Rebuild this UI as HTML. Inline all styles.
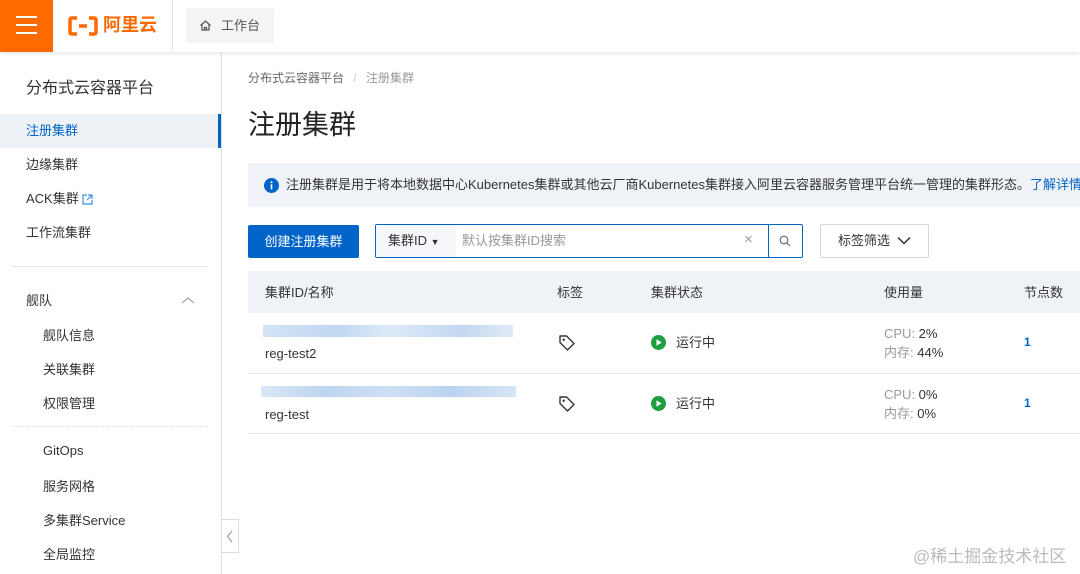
<!DOCTYPE html>
<html><head><meta charset="utf-8"><style>
*{margin:0;padding:0;box-sizing:border-box}
body{width:1080px;height:574px;overflow:hidden;background:#fff;font-family:"Liberation Sans","Noto Sans CJK SC",sans-serif;color:#333;position:relative;font-size:13px;line-height:1.25}
.abs{position:absolute;white-space:nowrap}
.hdr{position:absolute;left:0;top:0;width:1080px;height:52px;background:#fff;box-shadow:0 1px 4px rgba(0,0,0,.12);z-index:2}
.side{position:absolute;left:0;top:52px;width:222px;height:522px;border-right:1px solid #ddd;background:#fff}
.blue{color:#0064c8}
</style></head><body>
<div class="hdr">
  <div class="abs" style="left:0;top:0;width:53px;height:52px;background:#ff6a00">
    <div class="abs" style="left:16px;top:16px;width:21px;height:2px;background:#fff"></div>
    <div class="abs" style="left:16px;top:24px;width:21px;height:2px;background:#fff"></div>
    <div class="abs" style="left:16px;top:32px;width:21px;height:2px;background:#fff"></div>
  </div>
  <svg class="abs" style="left:68px;top:16px" width="30" height="20" viewBox="0 0 30 20"><path d="M9 2H4Q2 2 2 4V16Q2 18 4 18H9M21 2H26Q28 2 28 4V16Q28 18 26 18H21M11 10H19" stroke="#ff6a00" stroke-width="3.5" fill="none"/></svg>
  <div class="abs" style="left:103px;top:14px;font-size:18px;font-weight:bold;color:#ff6a00">阿里云</div>
  <div class="abs" style="left:172px;top:0;width:1px;height:52px;background:#e5e5e5"></div>
  <div class="abs" style="left:186px;top:8px;width:88px;height:35px;background:#f3f4f6;border-radius:2px"></div>
  <svg class="abs" style="left:199px;top:19px" width="13" height="13" viewBox="0 0 13 13"><path d="M1.5 6.5L6.5 2L11.5 6.5M3 5.5V11H10V5.5M5.5 11V8.5H7.5V11" stroke="#555" stroke-width="1.2" fill="none"/></svg>
  <div class="abs" style="left:221px;top:18px;font-size:13px;color:#555">工作台</div>
</div>
<div class="side">
  <div class="abs" style="left:26px;top:27px;font-size:16px;color:#333">分布式云容器平台</div>
  <div class="abs" style="left:0;top:62px;width:221px;height:34px;background:#eef2f7"></div>
  <div class="abs" style="left:218px;top:62px;width:3px;height:34px;background:#0064c8"></div>
  <div class="abs blue" style="left:26px;top:71px;font-size:13px">注册集群</div>
  <div class="abs" style="left:26px;top:105px">边缘集群</div>
  <div class="abs" style="left:26px;top:139px">ACK集群</div>
  <svg class="abs" style="left:81px;top:141px" width="13" height="13" viewBox="0 0 13 13"><path d="M6 2H2V11H11V7M7 2H11V6M11 2L6 7" stroke="#3a8ee6" stroke-width="1.2" fill="none"/></svg>
  <div class="abs" style="left:26px;top:173px">工作流集群</div>
  <div class="abs" style="left:12px;top:214px;width:196px;height:1px;background:#e5e5e5"></div>
  <div class="abs" style="left:26px;top:241px">舰队</div>
  <svg class="abs" style="left:181px;top:244px" width="14" height="9" viewBox="0 0 14 9"><path d="M1 7L7 2L13 7" stroke="#999" stroke-width="1.1" fill="none"/></svg>
  <div class="abs" style="left:43px;top:276px">舰队信息</div>
  <div class="abs" style="left:43px;top:310px">关联集群</div>
  <div class="abs" style="left:43px;top:344px">权限管理</div>
  <div class="abs" style="left:12px;top:374px;width:196px;border-top:1px dashed #e3e3e3"></div>
  <div class="abs" style="left:43px;top:391px">GitOps</div>
  <div class="abs" style="left:43px;top:427px">服务网格</div>
  <div class="abs" style="left:43px;top:461px">多集群Service</div>
  <div class="abs" style="left:43px;top:495px">全局监控</div>
</div>
<div class="abs" style="left:222px;top:519px;width:17px;height:34px;border:1px solid #ddd;border-left:none;background:#fff"></div>
<svg class="abs" style="left:226px;top:530px" width="8" height="13" viewBox="0 0 8 13"><path d="M6 1L1.5 6.5L6 12" stroke="#999" stroke-width="1.1" fill="none"/></svg>

<div class="abs" style="left:248px;top:71px;font-size:12px;color:#666">分布式云容器平台 <span style="color:#ccc;margin:0 6px">/</span> <span style="color:#999">注册集群</span></div>
<div class="abs" style="left:248px;top:109px;font-size:27px;color:#222">注册集群</div>

<div class="abs" style="left:248px;top:163px;width:840px;height:44px;background:#eff3f8"></div>
<svg class="abs" style="left:264px;top:178px" width="15" height="15" viewBox="0 0 15 15"><circle cx="7.5" cy="7.5" r="7.5" fill="#0064c8"/><rect x="6.7" y="6.3" width="1.6" height="5" fill="#fff"/><circle cx="7.5" cy="4.2" r="1" fill="#fff"/></svg>
<div class="abs" style="left:286px;top:177px;font-size:13px;color:#333">注册集群是用于将本地数据中心Kubernetes集群或其他云厂商Kubernetes集群接入阿里云容器服务管理平台统一管理的集群形态。<span class="blue">了解详情</span></div>

<div class="abs" style="left:248px;top:225px;width:111px;height:33px;background:#0064c8;border-radius:2px;color:#fff;font-size:13px;line-height:33px;text-align:center">创建注册集群</div>
<div class="abs" style="left:375px;top:224px;width:428px;height:34px;border:1px solid #0064c8;border-radius:2px;background:#fff"></div>
<div class="abs" style="left:376px;top:225px;width:80px;height:32px;background:#f5f7fa"></div>
<div class="abs" style="left:388px;top:233px;font-size:13px;color:#333">集群ID <span style="font-size:9px">▼</span></div>
<div class="abs" style="left:462px;top:233px;font-size:13px;color:#999">默认按集群ID搜索</div>
<div class="abs" style="left:744px;top:231px;font-size:15px;color:#999">×</div>
<div class="abs" style="left:768px;top:225px;width:1px;height:32px;background:#0064c8"></div>
<svg class="abs" style="left:779px;top:235px" width="12" height="12" viewBox="0 0 12 12"><circle cx="5" cy="5" r="3.8" stroke="#666" stroke-width="1.1" fill="none"/><path d="M8 8L11 11" stroke="#666" stroke-width="1.1"/></svg>
<div class="abs" style="left:820px;top:224px;width:109px;height:34px;border:1px solid #d6d6d6;border-radius:2px"></div>
<div class="abs" style="left:838px;top:233px;font-size:13px;color:#333">标签筛选</div>
<svg class="abs" style="left:897px;top:236px" width="14" height="9" viewBox="0 0 14 9"><path d="M1 1.5L7 7.5L13 1.5" stroke="#333" stroke-width="1.5" fill="none"/></svg>

<div class="abs" style="left:248px;top:271px;width:840px;height:42px;background:#eff3f8"></div>
<div class="abs" style="left:265px;top:285px">集群ID/名称</div>
<div class="abs" style="left:557px;top:285px">标签</div>
<div class="abs" style="left:651px;top:285px">集群状态</div>
<div class="abs" style="left:884px;top:285px">使用量</div>
<div class="abs" style="left:1024px;top:285px">节点数</div>

<div class="abs" style="left:263px;top:325px;width:250px;height:12px;background:linear-gradient(90deg,#cfe0f4,#b9d3f0 30%,#d9e7f7 50%,#bcd4ef 80%,#dce8f6);opacity:.9"></div>
<div class="abs" style="left:265px;top:346px">reg-test2</div>
<svg class="abs" style="left:558px;top:334px" width="18" height="17" viewBox="0 0 18 17"><path d="M2 2H8.5L16 9.5L9.5 16L2 8.5Z" stroke="#333" stroke-width="1.4" fill="none" stroke-linejoin="round"/><circle cx="5.7" cy="5.7" r="1.2" fill="#333"/></svg>
<svg class="abs" style="left:651px;top:335px" width="15" height="15" viewBox="0 0 15 15"><circle cx="7.5" cy="7.5" r="7.5" fill="#1e9e3e"/><path d="M5.5 4.3V10.7L10.7 7.5Z" fill="#fff"/></svg>
<div class="abs" style="left:676px;top:335px">运行中</div>
<div class="abs" style="left:884px;top:326px;color:#999">CPU: <span style="color:#333">2%</span></div>
<div class="abs" style="left:884px;top:345px;color:#999">内存: <span style="color:#333">44%</span></div>
<div class="abs blue" style="left:1024px;top:335px;font-weight:bold;font-size:12px">1</div>
<div class="abs" style="left:248px;top:373px;width:840px;height:1px;background:#e5e5e5"></div>

<div class="abs" style="left:261px;top:386px;width:255px;height:11px;background:linear-gradient(90deg,#d6e4f5,#b6cfee 25%,#c9dcf3 50%,#b4cded 75%,#d3e3f5);opacity:.9"></div>
<div class="abs" style="left:265px;top:407px">reg-test</div>
<svg class="abs" style="left:558px;top:395px" width="18" height="17" viewBox="0 0 18 17"><path d="M2 2H8.5L16 9.5L9.5 16L2 8.5Z" stroke="#333" stroke-width="1.4" fill="none" stroke-linejoin="round"/><circle cx="5.7" cy="5.7" r="1.2" fill="#333"/></svg>
<svg class="abs" style="left:651px;top:396px" width="15" height="15" viewBox="0 0 15 15"><circle cx="7.5" cy="7.5" r="7.5" fill="#1e9e3e"/><path d="M5.5 4.3V10.7L10.7 7.5Z" fill="#fff"/></svg>
<div class="abs" style="left:676px;top:396px">运行中</div>
<div class="abs" style="left:884px;top:387px;color:#999">CPU: <span style="color:#333">0%</span></div>
<div class="abs" style="left:884px;top:406px;color:#999">内存: <span style="color:#333">0%</span></div>
<div class="abs blue" style="left:1024px;top:396px;font-weight:bold;font-size:12px">1</div>
<div class="abs" style="left:248px;top:433px;width:840px;height:1px;background:#e5e5e5"></div>

<div class="abs" style="left:913px;top:546px;font-size:17px;color:#bbb">@稀土掘金技术社区</div>
</body></html>
